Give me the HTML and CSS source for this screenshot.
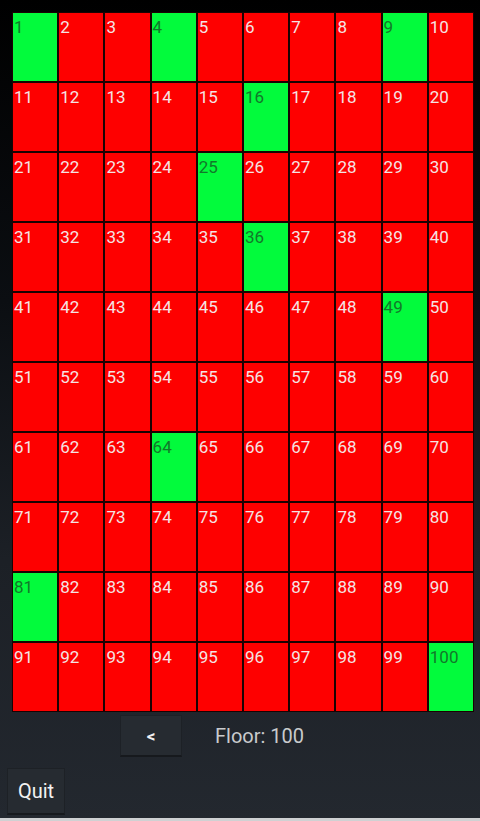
FILE: index.html
```html
<!DOCTYPE html>
<html>
<head>
<meta charset="utf-8">
<link rel="stylesheet" href="styles.css">
</head>
<body>
<div class="app">
  <div class="grid">
    <div class="cell on">1</div><div class="cell">2</div><div class="cell">3</div><div class="cell on">4</div><div class="cell">5</div><div class="cell">6</div><div class="cell">7</div><div class="cell">8</div><div class="cell on">9</div><div class="cell">10</div>
    <div class="cell">11</div><div class="cell">12</div><div class="cell">13</div><div class="cell">14</div><div class="cell">15</div><div class="cell on">16</div><div class="cell">17</div><div class="cell">18</div><div class="cell">19</div><div class="cell">20</div>
    <div class="cell">21</div><div class="cell">22</div><div class="cell">23</div><div class="cell">24</div><div class="cell on">25</div><div class="cell">26</div><div class="cell">27</div><div class="cell">28</div><div class="cell">29</div><div class="cell">30</div>
    <div class="cell">31</div><div class="cell">32</div><div class="cell">33</div><div class="cell">34</div><div class="cell">35</div><div class="cell on">36</div><div class="cell">37</div><div class="cell">38</div><div class="cell">39</div><div class="cell">40</div>
    <div class="cell">41</div><div class="cell">42</div><div class="cell">43</div><div class="cell">44</div><div class="cell">45</div><div class="cell">46</div><div class="cell">47</div><div class="cell">48</div><div class="cell on">49</div><div class="cell">50</div>
    <div class="cell">51</div><div class="cell">52</div><div class="cell">53</div><div class="cell">54</div><div class="cell">55</div><div class="cell">56</div><div class="cell">57</div><div class="cell">58</div><div class="cell">59</div><div class="cell">60</div>
    <div class="cell">61</div><div class="cell">62</div><div class="cell">63</div><div class="cell on">64</div><div class="cell">65</div><div class="cell">66</div><div class="cell">67</div><div class="cell">68</div><div class="cell">69</div><div class="cell">70</div>
    <div class="cell">71</div><div class="cell">72</div><div class="cell">73</div><div class="cell">74</div><div class="cell">75</div><div class="cell">76</div><div class="cell">77</div><div class="cell">78</div><div class="cell">79</div><div class="cell">80</div>
    <div class="cell on">81</div><div class="cell">82</div><div class="cell">83</div><div class="cell">84</div><div class="cell">85</div><div class="cell">86</div><div class="cell">87</div><div class="cell">88</div><div class="cell">89</div><div class="cell">90</div>
    <div class="cell">91</div><div class="cell">92</div><div class="cell">93</div><div class="cell">94</div><div class="cell">95</div><div class="cell">96</div><div class="cell">97</div><div class="cell">98</div><div class="cell">99</div><div class="cell on">100</div>
  </div>
  <div class="nav">
    <button class="btn back">&lt;</button>
    <span class="floor">Floor: 100</span>
  </div>
  <button class="btn quit">Quit</button>
  <div class="bottom-line"></div>
</div>
</body>
</html>
```
FILE: styles.css
```css
html, body {
  margin: 0;
  padding: 0;
}
body {
  width: 480px;
  height: 821px;
  overflow: hidden;
  font-family: Roboto, "Noto Sans", sans-serif;
  background: linear-gradient(to bottom, #000000 0px, #0b0e12 300px, #1c2026 560px, #23282f 821px);
}
.app {
  display: flex;
  flex-direction: column;
  height: 821px;
}
.grid {
  margin: 12px 0 0 12px;
  width: 462px;
  box-sizing: border-box;
  padding: 1px;
  display: grid;
  grid-template-columns: repeat(10, 1fr);
  grid-auto-rows: 68px;
  gap: 2px;
  background: #1a0202;
}
.cell {
  background: #fe0000;
  color: #f4e4e4;
  font-size: 17px;
  line-height: 20px;
  padding: 4px 0 0 1px;
  box-sizing: border-box;
}
.cell.on {
  background: #02fb3c;
  color: #12782a;
}
.nav {
  display: flex;
  align-items: center;
  margin-top: 3px;
  height: 42px;
}
.btn {
  font-family: Roboto, "Noto Sans", sans-serif;
  background: #262b31;
  border: 1px solid #1d2126;
  border-bottom: 2px solid #16191d;
  color: #f2f2f2;
  padding: 0;
  box-sizing: border-box;
}
.back {
  margin-left: 120px;
  width: 62px;
  height: 42px;
  font-size: 17px;
  font-weight: bold;
}
.floor {
  margin-left: 33px;
  color: #c9cbcd;
  font-size: 20px;
}
.quit {
  margin: 11px 0 0 7px;
  width: 58px;
  height: 47px;
  font-size: 20px;
}
.bottom-line {
  margin-top: auto;
  height: 3px;
  background: #cfd1d3;
}
```
